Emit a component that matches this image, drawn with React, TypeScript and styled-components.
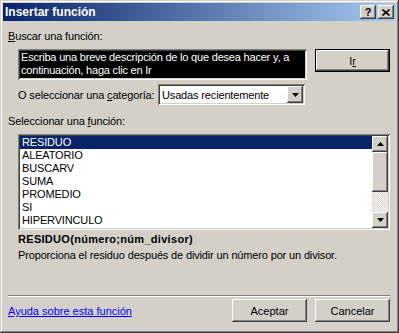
import React from 'react';
import styled, { createGlobalStyle } from 'styled-components';

const Global = createGlobalStyle`
  html, body { margin: 0; padding: 0; background: #d4d0c8; }
  body { font-family: "Liberation Sans", Arial, sans-serif; font-size: 11px; color: #000; letter-spacing: -0.15px; }
  * { box-sizing: border-box; }
`;

const raised = `box-shadow: inset -1px -1px #404040, inset 1px 1px #fff, inset -2px -2px #808080, inset 2px 2px #d4d0c8;`;
const sunken = `box-shadow: inset 1px 1px #808080, inset -1px -1px #fff, inset 2px 2px #404040, inset -2px -2px #d4d0c8;`;

const Window = styled.div`
  width: 399px;
  height: 333px;
  padding: 3px;
  display: flex;
  flex-direction: column;
  background: #d4d0c8;
  box-shadow: inset -1px -1px #404040, inset 1px 1px #d4d0c8, inset -2px -2px #808080, inset 2px 2px #fff;
`;

const TitleBar = styled.div`
  height: 18px;
  display: flex;
  align-items: center;
  padding: 0 2px;
  background: linear-gradient(to right, #0a246a, #a6caf0);
  color: #fff;
  font-weight: bold;
  font-size: 12px;
  letter-spacing: 0;
`;

const TitleText = styled.span`
  flex: 1;
`;

const TitleButtons = styled.div`
  display: flex;
  gap: 2px;
`;

const TitleButton = styled.div`
  width: 16px;
  height: 14px;
  background: #d4d0c8;
  ${raised}
  display: flex;
  align-items: center;
  justify-content: center;
  color: #000;
  font-weight: bold;
  font-size: 11px;
  line-height: 14px;
`;

const Body = styled.div`
  flex: 1;
  display: flex;
  flex-direction: column;
  padding: 0 6px 8px 5px;
`;

const Label = styled.div<{ $mt: number; $indent?: boolean; $bold?: boolean }>`
  margin-top: ${(p) => p.$mt}px;
  margin-left: ${(p) => (p.$indent ? 10 : 0)}px;
  height: 13px;
  line-height: 13px;
  white-space: nowrap;
  font-weight: ${(p) => (p.$bold ? 'bold' : 'normal')};
  letter-spacing: ${(p) => (p.$bold ? '0.3px' : '-0.15px')};
`;

const SearchRow = styled.div`
  margin-top: 6px;
  margin-left: 10px;
  display: flex;
  gap: 8px;
  align-items: flex-start;
`;

const SearchBox = styled.div`
  width: 290px;
  height: 31px;
  background: #000;
  color: #fff;
  padding: 2px 3px 0 3px;
  line-height: 13px;
  white-space: nowrap;
  overflow: hidden;
  letter-spacing: -0.2px;
  ${sunken}
`;

const Button = styled.div<{ $default?: boolean }>`
  width: 75px;
  height: 23px;
  background: #d4d0c8;
  ${(p) =>
    p.$default
      ? 'box-shadow: inset 0 0 0 1px #000, inset -2px -2px #404040, inset 2px 2px #fff, inset -3px -3px #808080;'
      : raised}
  display: flex;
  align-items: center;
  justify-content: center;
  color: #000;
  letter-spacing: 0;
`;

const CategoryRow = styled.div`
  margin-top: 4px;
  margin-left: 10px;
  display: flex;
  align-items: center;
  height: 21px;
`;

const CategoryLabel = styled.span`
  width: 140px;
  white-space: nowrap;
`;

const Select = styled.div`
  width: 147px;
  height: 21px;
  background: #fff;
  ${sunken}
  display: flex;
  align-items: center;
  padding: 2px 2px 2px 4px;
`;

const SelectText = styled.span`
  flex: 1;
`;

const ArrowButton = styled.div<{ $h: number }>`
  width: 16px;
  height: ${(p) => p.$h}px;
  flex: none;
  background: #d4d0c8;
  ${raised}
  display: flex;
  align-items: center;
  justify-content: center;
`;

const ListBox = styled.div`
  margin-top: 6px;
  margin-left: 10px;
  height: 96px;
  background: #fff;
  ${sunken}
  padding: 2px;
  display: flex;
`;

const Items = styled.div`
  flex: 1;
  display: flex;
  flex-direction: column;
`;

const Item = styled.div<{ $sel?: boolean }>`
  height: 13px;
  line-height: 13px;
  padding-left: 2px;
  background: ${(p) => (p.$sel ? '#0a246a' : 'transparent')};
  color: ${(p) => (p.$sel ? '#fff' : '#000')};
`;

const ScrollBar = styled.div`
  width: 16px;
  display: flex;
  flex-direction: column;
`;

const Thumb = styled.div`
  height: 40px;
  background: #d4d0c8;
  ${raised}
`;

const Track = styled.div`
  flex: 1;
  background-color: #fff;
  background-image: repeating-conic-gradient(#d4d0c8 0% 25%, #fff 0% 50%);
  background-size: 2px 2px;
`;

const Spacer = styled.div`
  flex: 1;
`;

const Separator = styled.div`
  height: 2px;
  border-top: 1px solid #808080;
  border-bottom: 1px solid #fff;
`;

const BottomRow = styled.div`
  margin-top: 2px;
  display: flex;
  align-items: center;
  gap: 8px;
`;

const Link = styled.span`
  flex: 1;
  color: #0000ff;
  text-decoration: underline;
  white-space: nowrap;
  margin-top: 1px;
  letter-spacing: 0;
`;

const Up = () => (
  <svg width="7" height="4" viewBox="0 0 7 4">
    <path d="M3.5 0 L7 4 L0 4 Z" fill="#000" />
  </svg>
);

const Down = () => (
  <svg width="7" height="4" viewBox="0 0 7 4">
    <path d="M0 0 L7 0 L3.5 4 Z" fill="#000" />
  </svg>
);

const items = ['RESIDUO', 'ALEATORIO', 'BUSCARV', 'SUMA', 'PROMEDIO', 'SI', 'HIPERVINCULO'];

export default function App() {
  return (
    <>
      <Global />
      <Window>
        <TitleBar>
          <TitleText>Insertar función</TitleText>
          <TitleButtons>
            <TitleButton>?</TitleButton>
            <TitleButton>
              <svg width="8" height="7" viewBox="0 0 8 7">
                <path d="M0.5 0.5 L7.5 6.5 M7.5 0.5 L0.5 6.5" stroke="#000" strokeWidth="1.6" />
              </svg>
            </TitleButton>
          </TitleButtons>
        </TitleBar>
        <Body>
          <Label $mt={9}>
            <u>B</u>uscar una función:
          </Label>
          <SearchRow>
            <SearchBox>
              Escriba una breve descripción de lo que desea hacer y, a
              <br />
              continuación, haga clic en Ir
            </SearchBox>
            <Button $default>
              I<u>r</u>
            </Button>
          </SearchRow>
          <CategoryRow>
            <CategoryLabel>
              O seleccionar una <u>c</u>ategoría:
            </CategoryLabel>
            <Select>
              <SelectText>Usadas recientemente</SelectText>
              <ArrowButton $h={17}>
                <Down />
              </ArrowButton>
            </Select>
          </CategoryRow>
          <Label $mt={10}>
            Seleccionar una <u>f</u>unción:
          </Label>
          <ListBox>
            <Items>
              {items.map((it, i) => (
                <Item key={it} $sel={i === 0}>
                  {it}
                </Item>
              ))}
            </Items>
            <ScrollBar>
              <ArrowButton $h={16}>
                <Up />
              </ArrowButton>
              <Thumb />
              <Track />
              <ArrowButton $h={16}>
                <Down />
              </ArrowButton>
            </ScrollBar>
          </ListBox>
          <Label $mt={3} $indent $bold>
            RESIDUO(número;núm_divisor)
          </Label>
          <Label $mt={3} $indent>
            Proporciona el residuo después de dividir un número por un divisor.
          </Label>
          <Spacer />
          <Separator />
          <BottomRow>
            <Link>Ayuda sobre esta función</Link>
            <Button>Aceptar</Button>
            <Button>Cancelar</Button>
          </BottomRow>
        </Body>
      </Window>
    </>
  );
}
